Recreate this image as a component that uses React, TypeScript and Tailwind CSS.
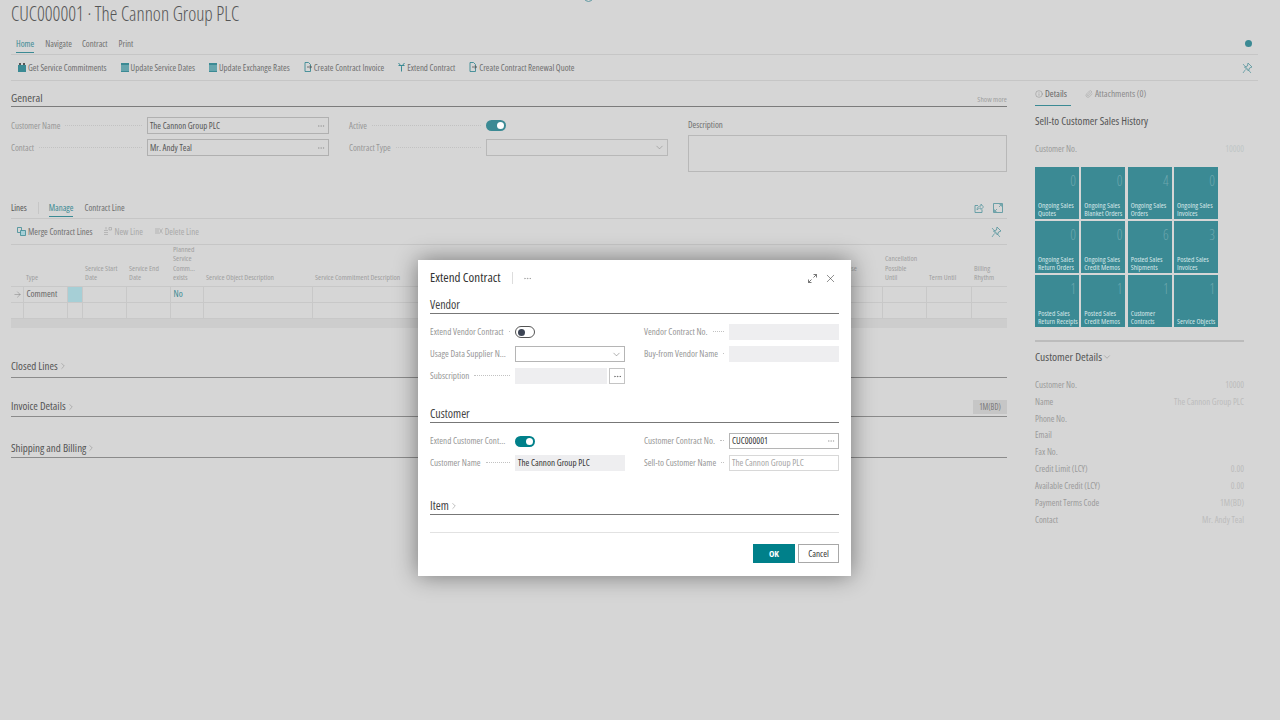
import { ArrowRight, ChevronDown, ChevronRight, Info, MoreHorizontal, Paperclip, X } from "lucide-react";
import { ReactNode } from "react";

function TableIcon() {
  return (
    <svg width="8" height="9" viewBox="0 0 8 9" className="shrink-0">
      <rect x="0" y="0" width="8" height="9" fill="#3b8a94" />
      <path d="M0 3h8M0 5h8M0 7h8" stroke="#cfe3e6" strokeWidth="0.6" />
    </svg>
  );
}

function DocIcon() {
  return (
    <svg width="8" height="10" viewBox="0 0 8 10" fill="none" className="shrink-0">
      <path d="M1 .5h3.5L6.5 2.5V9.5H1z" stroke="#3b8a94" strokeWidth="0.9" />
      <path d="M3 5h4.5M6 3.5 7.5 5 6 6.5" stroke="#555" strokeWidth="0.8" />
    </svg>
  );
}

function MergeIcon() {
  return (
    <svg width="9" height="9" viewBox="0 0 9 9" fill="none" className="shrink-0">
      <path d="M.5.5h4v5h-4z" stroke="#3b8a94" strokeWidth="0.8" />
      <path d="M3.5 3.5h5v5h-5z" fill="#a6cfd6" stroke="#3b8a94" strokeWidth="0.8" />
    </svg>
  );
}

function NewLineIcon() {
  return (
    <svg width="8" height="8" viewBox="0 0 8 8" fill="none" className="shrink-0">
      <path d="M0 3.5h4M0 5.5h4M0 7.5h4M2 0v2.5" stroke="#a8a8a8" strokeWidth="0.7" />
      <path d="M5 .5h2.5v2.5H5z" stroke="#a8a8a8" strokeWidth="0.7" />
    </svg>
  );
}

function DeleteLineIcon() {
  return (
    <svg width="8" height="8" viewBox="0 0 8 8" fill="none" className="shrink-0">
      <path d="M0 2h4M0 4h4M0 6h4M4.5 1.5l3 5M7.5 1.5l-3 5" stroke="#a8a8a8" strokeWidth="0.7" />
    </svg>
  );
}

function ExtendIcon() {
  return (
    <svg width="7" height="10" viewBox="0 0 7 10" fill="none" className="shrink-0">
      <path d="M.5 1 3.5 4.5 6.5 1M.5 3.5h6M3.5 4.5V9.5" stroke="#3b8a94" strokeWidth="1" />
    </svg>
  );
}

function CommitIcon() {
  return (
    <svg width="8" height="9" viewBox="0 0 8 9" className="shrink-0">
      <path d="M0 2h8v7H0z" fill="#3b8a94" />
      <path d="M1 0h2v2H1zM5 0h2v2H5z" fill="#555" />
    </svg>
  );
}

function PinOff() {
  return (
    <svg width="11" height="12" viewBox="0 0 11 12" fill="none" className="shrink-0">
      <path d="M6 1 10 5 7.5 6 6.5 9 2.5 5 5.5 4z" stroke="#5f9aa2" strokeWidth="0.9" />
      <path d="M3.5 7.5 1 11M1 2l8 9" stroke="#5f9aa2" strokeWidth="0.8" />
    </svg>
  );
}

function ShareBox() {
  return (
    <svg width="10" height="10" viewBox="0 0 10 10" fill="none" className="shrink-0">
      <path d="M4 2.5H1v7h7V6.5" stroke="#5f9aa2" strokeWidth="0.9" />
      <path d="M3 7c0-3 2-4 4-4V1l2.5 3L7 6.5V5C5 5 4 6 3 7z" stroke="#5f9aa2" strokeWidth="0.8" />
    </svg>
  );
}

function ExpandBox() {
  return (
    <svg width="10" height="10" viewBox="0 0 10 10" fill="none" className="shrink-0">
      <path d="M.5.5h9v9h-9z" stroke="#5f9aa2" strokeWidth="0.9" />
      <path d="M1.5 8.5 4 6M6 4l2.5-2.5M6.5 1.5h2v2M1.5 6.5v2h2" stroke="#5f9aa2" strokeWidth="0.8" />
    </svg>
  );
}

function ExpandArrow() {
  return (
    <svg width="9" height="9" viewBox="0 0 9 9" fill="none" className="shrink-0">
      <path d="M.5 8.5l3-3M5.5 3.5l3-3M5.5.5h3v3M.5 5.5v3h3" stroke="#555" strokeWidth="0.8" />
    </svg>
  );
}

function ToolItem({ icon, label }: { icon: ReactNode; label: string }) {
  return (
    <div className="flex items-center gap-[2px] whitespace-nowrap">
      {icon}
      <span>{label}</span>
    </div>
  );
}

function Leader({ label }: { label: string }) {
  return (
    <div className="flex flex-1 min-w-0 items-center gap-[5px] pr-[5px]">
      <span className="whitespace-nowrap text-[#969696]">{label}</span>
      <span className="flex-1 border-b border-dotted border-[#c2c2c2]" />
    </div>
  );
}

function Toggle({ on, dim }: { on: boolean; dim?: boolean }) {
  if (on) {
    return (
      <div className={`flex h-[11px] w-[20px] items-center justify-end rounded-full pr-[2px] ${dim ? "bg-[#3b8a94]" : "bg-[#00808a]"}`}>
        <div className="h-[7px] w-[7px] rounded-full bg-white" />
      </div>
    );
  }
  return (
    <div className="flex h-[12px] w-[20px] items-center rounded-full border border-[#555] bg-white pl-[2px]">
      <div className="h-[7px] w-[7px] rounded-full bg-[#3c4454]" />
    </div>
  );
}

const TILES = [
  ["0", "Ongoing Sales", "Quotes"],
  ["0", "Ongoing Sales", "Blanket Orders"],
  ["4", "Ongoing Sales", "Orders"],
  ["0", "Ongoing Sales", "Invoices"],
  ["0", "Ongoing Sales", "Return Orders"],
  ["0", "Ongoing Sales", "Credit Memos"],
  ["6", "Posted Sales", "Shipments"],
  ["3", "Posted Sales", "Invoices"],
  ["1", "Posted Sales", "Return Receipts"],
  ["1", "Posted Sales", "Credit Memos"],
  ["1", "Customer", "Contracts"],
  ["1", "", "Service Objects"],
];

const DETAILS = [
  ["Customer No.", "10000"],
  ["Name", "The Cannon Group PLC"],
  ["Phone No.", ""],
  ["Email", ""],
  ["Fax No.", ""],
  ["Credit Limit (LCY)", "0.00"],
  ["Available Credit (LCY)", "0.00"],
  ["Payment Terms Code", "1M(BD)"],
  ["Contact", "Mr. Andy Teal"],
];

function LinesTable() {
  const th = "align-bottom font-normal text-left pb-[3px] pl-[3px] leading-[9.4px]";
  const cells = "border-r border-[#c8c8c8]";
  return (
    <table className="w-[996px] table-fixed border-collapse text-[7.6px] text-[#a0a0a0]">
      <colgroup>
        <col className="w-[12px]" />
        <col className="w-[44px]" />
        <col className="w-[15px]" />
        <col className="w-[44px]" />
        <col className="w-[44px]" />
        <col className="w-[33px]" />
        <col className="w-[109px]" />
        <col className="w-[512px]" />
        <col className="w-[58px]" />
        <col className="w-[44px]" />
        <col className="w-[45px]" />
        <col className="w-[36px]" />
      </colgroup>
      <thead>
        <tr className="h-[40px] border-b border-[#c8c8c8]">
          <th className={th}></th>
          <th className={th}>Type</th>
          <th className={th}></th>
          <th className={th}>Service Start<br />Date</th>
          <th className={th}>Service End<br />Date</th>
          <th className={th}>Planned<br />Service<br />Comm...<br />exists</th>
          <th className={th}>Service Object Description</th>
          <th className={th}>Service Commitment Description</th>
          <th className={th}>Billing Base<br />Period</th>
          <th className={th}>Cancellation<br />Possible<br />Until</th>
          <th className={th}>Term Until</th>
          <th className={th}>Billing<br />Rhythm</th>
        </tr>
      </thead>
      <tbody>
        <tr className="h-[16px] border-b border-[#c8c8c8] text-[9.2px] text-[#666]">
          <td className={cells}>
            <ArrowRight size={9} strokeWidth={1} className="ml-[2px] text-[#666]" />
          </td>
          <td className={`${cells} pl-[3px]`}>Comment</td>
          <td className={`${cells} bg-[#a6cfd6]`}></td>
          <td className={cells}></td>
          <td className={cells}></td>
          <td className={`${cells} pl-[3px] text-[#3b8a94]`}>No</td>
          <td className={cells}></td>
          <td className={cells}></td>
          <td className={cells}></td>
          <td className={cells}></td>
          <td className={cells}></td>
          <td></td>
        </tr>
        <tr className="h-[16px] border-b border-[#c8c8c8]">
          {Array.from({ length: 11 }).map((_, i) => (
            <td key={i} className={cells}></td>
          ))}
          <td></td>
        </tr>
      </tbody>
    </table>
  );
}

function ExtendDialog() {
  const gray = "h-[16px] w-[110px] bg-[#eeeef0]";
  return (
    <div className="absolute left-[418px] top-[260px] h-[316px] w-[433px] bg-white px-[12px] text-[9.1px] shadow-[0_0_22px_rgba(0,0,0,0.45)]">
      <div className="flex h-[36px] items-center">
        <span className="text-[13px] font-medium text-[#333]">Extend Contract</span>
        <span className="ml-[12px] h-[12px] border-l border-[#ddd]" />
        <MoreHorizontal size={9} strokeWidth={1} className="ml-[10px] text-[#777]" />
        <span className="ml-auto"><ExpandArrow /></span>
        <X size={13} strokeWidth={1} className="ml-[7px] mr-[2px] text-[#333]" />
      </div>
      <div className="flex h-[18px] items-center border-b border-[#777] text-[12px] font-medium text-[#444]">Vendor</div>
      <div className="mt-[10px] grid grid-cols-[195px_195px] gap-x-[19px] gap-y-[6px]">
        <div className="flex h-[16px] items-center">
          <Leader label="Extend Vendor Contract" />
          <div className="w-[110px]"><Toggle on={false} /></div>
        </div>
        <div className="flex h-[16px] items-center">
          <Leader label="Vendor Contract No." />
          <div className={gray} />
        </div>
        <div className="flex h-[16px] items-center">
          <Leader label="Usage Data Supplier N..." />
          <div className="flex h-[16px] w-[110px] items-center justify-end border border-[#b5b5b5] pr-[2px]">
            <ChevronDown size={11} strokeWidth={1} className="text-[#555]" />
          </div>
        </div>
        <div className="flex h-[16px] items-center">
          <Leader label="Buy-from Vendor Name" />
          <div className={gray} />
        </div>
        <div className="flex h-[16px] items-center">
          <Leader label="Subscription" />
          <div className="flex w-[110px] gap-[2px]">
            <div className="h-[16px] flex-1 bg-[#eeeef0]" />
            <div className="flex h-[16px] w-[16px] items-center justify-center border border-[#c4c4c4]">
              <MoreHorizontal size={9} strokeWidth={1.2} className="text-[#444]" />
            </div>
          </div>
        </div>
      </div>
      <div className="mt-[21px] flex h-[18px] items-center border-b border-[#777] text-[12px] font-medium text-[#444]">Customer</div>
      <div className="mt-[10px] grid grid-cols-[195px_195px] gap-x-[19px] gap-y-[6px]">
        <div className="flex h-[16px] items-center">
          <Leader label="Extend Customer Cont..." />
          <div className="w-[110px]"><Toggle on /></div>
        </div>
        <div className="flex h-[16px] items-center">
          <Leader label="Customer Contract No." />
          <div className="flex h-[16px] w-[110px] items-center justify-between border border-[#b5b5b5] pl-[2px] pr-[3px] text-[#333]">
            CUC000001
            <MoreHorizontal size={8} strokeWidth={1} className="text-[#777]" />
          </div>
        </div>
        <div className="flex h-[16px] items-center">
          <Leader label="Customer Name" />
          <div className="flex h-[16px] w-[110px] items-center bg-[#eeeef0] pl-[3px] text-[#333]">The Cannon Group PLC</div>
        </div>
        <div className="flex h-[16px] items-center">
          <Leader label="Sell-to Customer Name" />
          <div className="flex h-[16px] w-[110px] items-center border border-[#d8d8d8] pl-[2px] text-[#a5a5a5]">The Cannon Group PLC</div>
        </div>
      </div>
      <div className="mt-[26px] flex h-[18px] items-center border-b border-[#777] text-[12px] text-[#444]">
        Item
        <ChevronRight size={10} strokeWidth={1} className="text-[#666]" />
      </div>
      <div className="mt-[17px] border-b border-[#e2e2e2]" />
      <div className="mt-[11px] flex justify-end gap-[3px]">
        <div className="flex h-[19px] w-[42px] items-center justify-center bg-[#00808a] font-bold text-white">OK</div>
        <div className="flex h-[19px] w-[41px] items-center justify-center border border-[#a8a8a8] text-[#333]">Cancel</div>
      </div>
    </div>
  );
}

export default function App() {
  return (
    <div className="relative h-[720px] w-[1280px] overflow-hidden bg-[#d6d6d6] font-['Open_Sans',sans-serif] text-[8.9px] [font-stretch:75%]">
      <div className="absolute left-[584px] top-[-7px] h-[9px] w-[9px] rounded-full border border-[#5f9aa2]" />

      <div className="flex h-[29px] items-center pl-[11px] text-[19.2px] font-light text-[#555]">
        CUC000001 · The Cannon Group PLC
      </div>

      {/* action bar */}
      <div className="ml-[11px] mr-[22px]">
        <div className="mt-[5px] flex h-[21px] items-center border-b border-[#c6c6c6] pl-[5px] text-[#6e6e6e]">
          <span className="relative mr-[11px] text-[#3b8a94] after:absolute after:bottom-[-2px] after:left-0 after:h-[1px] after:w-full after:bg-[#3b8a94]">Home</span>
          <span className="mr-[10px]">Navigate</span>
          <span className="mr-[11px]">Contract</span>
          <span>Print</span>
          <span className="mb-[1px] ml-auto mr-[6px] h-[7px] w-[7px] rounded-full bg-[#3b8a94]" />
        </div>
        <div className="flex h-[26px] items-center gap-[14px] border-b border-[#c6c6c6] pl-[7px] text-[#6e6e6e]">
          <ToolItem icon={<CommitIcon />} label="Get Service Commitments" />
          <ToolItem icon={<TableIcon />} label="Update Service Dates" />
          <ToolItem icon={<TableIcon />} label="Update Exchange Rates" />
          <ToolItem icon={<DocIcon />} label="Create Contract Invoice" />
          <ToolItem icon={<ExtendIcon />} label="Extend Contract" />
          <ToolItem icon={<DocIcon />} label="Create Contract Renewal Quote" />
          <span className="ml-auto mr-[5px]"><PinOff /></span>
        </div>
      </div>

      <div className="ml-[11px] flex">
        {/* main column */}
        <div className="w-[996px]">
          <div className="flex h-[26px] items-end justify-between border-b-[1.5px] border-[#7c7c7c]">
            <span className="text-[11.6px] text-[#555]">General</span>
            <span className="pb-[1px] text-[7.6px] text-[#a0a0a0]">Show more</span>
          </div>
          <div className="mt-[10px] grid grid-cols-[318px_319px_319px] gap-x-[20px]">
            <div className="flex flex-col gap-[5px]">
              <div className="flex h-[17px] items-center">
                <Leader label="Customer Name" />
                <div className="flex h-[17px] w-[182px] items-center justify-between border border-[#b0b0b0] pl-[2px] pr-[3px] text-[#555]">
                  The Cannon Group PLC
                  <MoreHorizontal size={8} strokeWidth={1} className="text-[#777]" />
                </div>
              </div>
              <div className="flex h-[17px] items-center">
                <Leader label="Contact" />
                <div className="flex h-[17px] w-[182px] items-center justify-between border border-[#b0b0b0] pl-[2px] pr-[3px] text-[#555]">
                  Mr. Andy Teal
                  <MoreHorizontal size={8} strokeWidth={1} className="text-[#777]" />
                </div>
              </div>
            </div>
            <div className="flex flex-col gap-[5px]">
              <div className="flex h-[17px] items-center">
                <Leader label="Active" />
                <div className="w-[182px]"><Toggle on dim /></div>
              </div>
              <div className="flex h-[17px] items-center">
                <Leader label="Contract Type" />
                <div className="flex h-[17px] w-[182px] items-center justify-end border border-[#b8b8b8] pr-[2px]">
                  <ChevronDown size={11} strokeWidth={1} className="text-[#777]" />
                </div>
              </div>
            </div>
            <div>
              <div className="flex h-[18px] items-start pt-[1px] text-[#6e6e6e]">Description</div>
              <div className="h-[37px] border border-[#b8b8b8]" />
            </div>
          </div>

          {/* lines */}
          <div className="mt-[26px] flex h-[21px] items-center border-b border-[#c6c6c6] text-[#6e6e6e]">
            <span className="text-[#555]">Lines</span>
            <span className="ml-[11px] h-[12px] border-l border-[#c6c6c6]" />
            <span className="relative ml-[10px] text-[#3b8a94] after:absolute after:bottom-[-2px] after:left-0 after:h-[1px] after:w-full after:bg-[#3b8a94]">Manage</span>
            <span className="ml-[11px]">Contract Line</span>
            <span className="ml-auto"><ShareBox /></span>
            <span className="ml-[9px] mr-[4px]"><ExpandBox /></span>
          </div>
          <div className="flex h-[26px] items-center border-b border-[#c6c6c6] pl-[6px] text-[#6e6e6e]">
            <ToolItem icon={<MergeIcon />} label="Merge Contract Lines" />
            <span className="ml-[12px] text-[#a8a8a8]"><ToolItem icon={<NewLineIcon />} label="New Line" /></span>
            <span className="ml-[12px] text-[#a8a8a8]"><ToolItem icon={<DeleteLineIcon />} label="Delete Line" /></span>
            <span className="ml-auto mr-[5px]"><PinOff /></span>
          </div>
          <LinesTable />
          <div className="h-[9px] bg-[#cdcdcd]" />

          <div className="mt-[30px] flex h-[20px] items-center border-b border-[#8b8b8b] pb-[2px] text-[11px] text-[#555]">
            Closed Lines
            <ChevronRight size={10} strokeWidth={1} className="text-[#777]" />
          </div>
          <div className="mt-[19px] flex h-[20px] items-center justify-between border-b border-[#8b8b8b] pt-[1px] text-[11px] text-[#555]">
            <span className="flex items-center">
              Invoice Details
              <ChevronRight size={10} strokeWidth={1} className="text-[#777]" />
            </span>
            <span className="flex h-[14px] w-[34px] items-center justify-center bg-[#c6c6c6] text-[8px] text-[#777]">1M(BD)</span>
          </div>
          <div className="mt-[21px] flex h-[20px] items-center border-b border-[#8b8b8b] pt-[2px] text-[11px] text-[#555]">
            Shipping and Billing
            <ChevronRight size={10} strokeWidth={1} className="text-[#777]" />
          </div>
        </div>

        {/* factbox */}
        <div className="ml-[28px] w-[209px]">
          <div className="flex h-[25px] items-center text-[9.4px] text-[#666]">
            <div className="relative flex h-full items-center gap-[2px] pt-[1px] font-medium after:absolute after:bottom-0 after:left-0 after:h-[1px] after:w-[36px] after:bg-[#3b8a94]">
              <Info size={8} strokeWidth={1} />
              <span>Details</span>
            </div>
            <div className="ml-[18px] flex items-center gap-[2px] pt-[1px] text-[#8a8a8a]">
              <Paperclip size={8} strokeWidth={1} />
              <span>Attachments (0)</span>
            </div>
          </div>
          <div className="mt-[8px] text-[11px] font-medium leading-[14px] text-[#555]">Sell-to Customer Sales History</div>
          <div className="mt-[15px] flex h-[12px] items-center justify-between text-[#9a9a9a]">
            <span>Customer No.</span>
            <span className="text-[#c0c6c6]">10000</span>
          </div>
          <div className="mt-[12px] grid w-[183px] grid-cols-4 gap-x-[2.33px] gap-y-[2px]">
            {TILES.map(([n, a, b], i) => (
              <div key={i} className="flex h-[52px] flex-col bg-[#3b8a94] px-[3px] pb-[1px] text-[7.4px] leading-[7.8px] text-[#d5e6e8]">
                <div className="mt-[6px] text-right text-[14px] leading-[15px] font-light text-[#6da7ae]">{n}</div>
                <div className="mt-auto whitespace-nowrap">{a}</div>
                <div className="whitespace-nowrap">{b}</div>
              </div>
            ))}
          </div>
          <div className="mt-[13px] border-b-2 border-[#bcbcbc]" />
          <div className="mt-[8px] flex h-[14px] items-center text-[11.5px] font-medium text-[#555]">
            Customer Details
            <ChevronDown size={10} strokeWidth={1} className="text-[#777]" />
          </div>
          <div className="mt-[12px] flex flex-col">
            {DETAILS.map(([k, v]) => (
              <div key={k} className="flex h-[16.9px] items-center justify-between text-[#9a9a9a]">
                <span>{k}</span>
                <span className="text-[#bcbcbc]">{v}</span>
              </div>
            ))}
          </div>
        </div>
      </div>

      <ExtendDialog />
    </div>
  );
}
